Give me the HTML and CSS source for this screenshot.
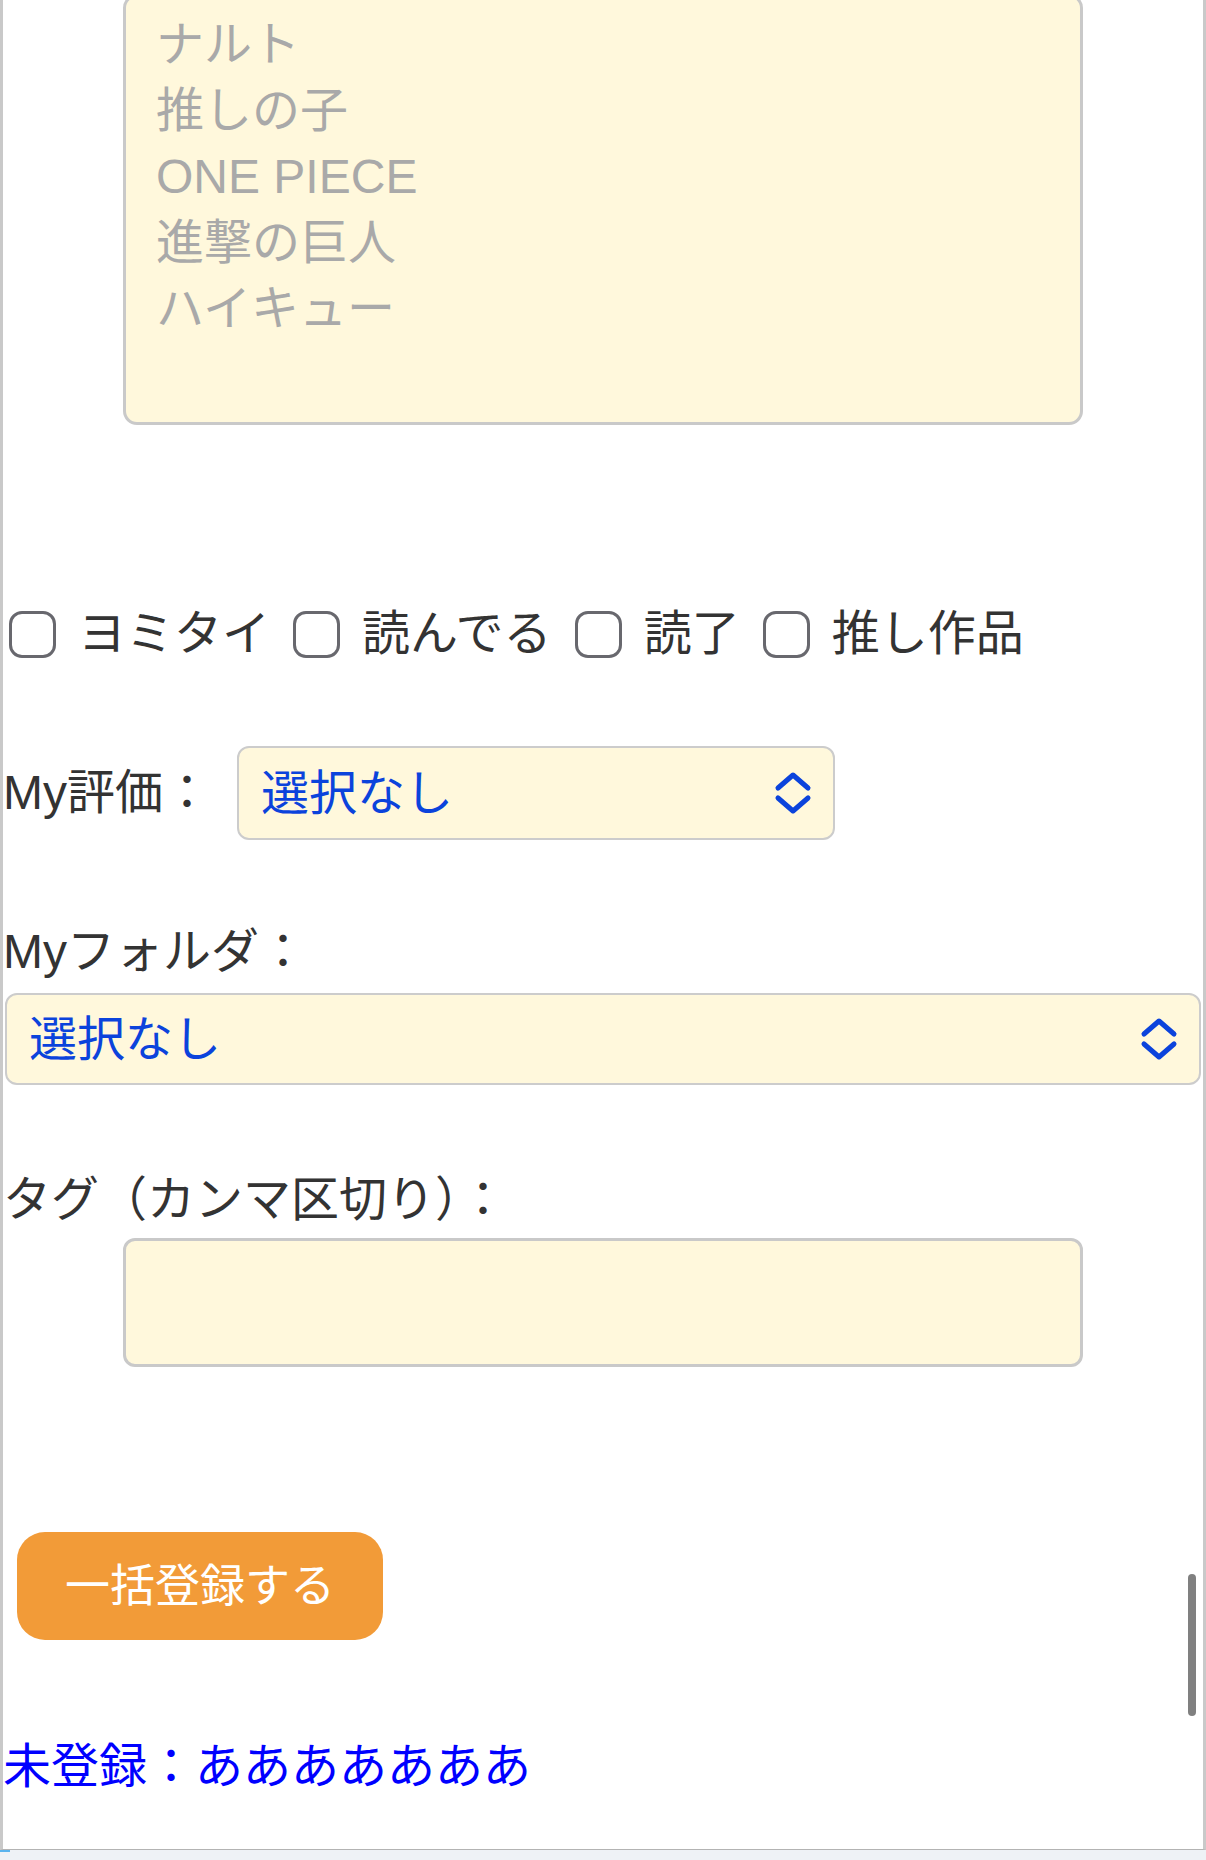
FILE: index.html
```html
<!DOCTYPE html>
<html lang="ja">
<head>
<meta charset="utf-8">
<title>一括登録</title>
<link rel="stylesheet" href="styles.css">
</head>
<body>
<div class="frame">
  <form class="form">
    <textarea class="titles" placeholder="ナルト&#10;推しの子&#10;ONE PIECE&#10;進撃の巨人&#10;ハイキュー"></textarea>

    <div class="statuses">
      <label class="check"><input type="checkbox"><span>ヨミタイ</span></label>
      <label class="check"><input type="checkbox"><span>読んでる</span></label>
      <label class="check"><input type="checkbox"><span>読了</span></label>
      <label class="check"><input type="checkbox"><span>推し作品</span></label>
    </div>

    <div class="rating">
      <label class="field-label">My評価：</label>
      <div class="select-wrap rating-select">
        <select class="select"><option>選択なし</option></select>
        <svg class="chev" width="40" height="44" viewBox="0 0 40 44" aria-hidden="true">
          <path d="M5 17 L20 4 L35 17 M5 27 L20 40 L35 27" fill="none" stroke="#0b43dc" stroke-width="5" stroke-linecap="round" stroke-linejoin="round"/>
        </svg>
      </div>
    </div>

    <div class="field-label folder-label">Myフォルダ：</div>
    <div class="select-wrap folder-select">
      <select class="select"><option>選択なし</option></select>
      <svg class="chev" width="40" height="44" viewBox="0 0 40 44" aria-hidden="true">
        <path d="M5 17 L20 4 L35 17 M5 27 L20 40 L35 27" fill="none" stroke="#0b43dc" stroke-width="5" stroke-linecap="round" stroke-linejoin="round"/>
      </svg>
    </div>

    <div class="field-label tag-label">タグ（カンマ区切り）：</div>
    <input class="tags" type="text">

    <button class="submit" type="button">一括登録する</button>

    <div class="unregistered">未登録：あああああああ</div>
  </form>
  <div class="scroll-thumb"></div>
</div>
<div class="bottom-bar"><span class="bottom-mark"></span></div>
</body>
</html>
```

FILE: styles.css
```css
* {
  box-sizing: border-box;
}

html,
body {
  margin: 0;
  padding: 0;
}

body {
  font-family: "Liberation Sans", "Noto Sans CJK JP", sans-serif;
  font-size: 48px;
  line-height: 66px;
  color: #333333;
  background: #ffffff;
}

.frame {
  position: relative;
  height: 1850px;
  border-left: 3px solid #c9c9c9;
  border-right: 3px solid #c9c9c9;
  border-bottom: 1px solid #b3b3b3;
  overflow: hidden;
}

.form {
  display: block;
}

.titles {
  display: block;
  width: 80%;
  height: 431px;
  margin: -6px auto 0;
  padding: 15px 30px 11px;
  border: 3px solid #c9c9c9;
  border-radius: 14px;
  background: #fff8dc;
  font: inherit;
  line-height: 66px;
  color: #333333;
  resize: none;
  outline: none;
}

.titles::placeholder {
  color: #a9a9a9;
  opacity: 1;
}

.statuses {
  display: flex;
  align-items: center;
  height: 66px;
  margin-top: 176px;
  padding-left: 6px;
}

.check {
  display: flex;
  align-items: center;
}

.check + .check {
  margin-left: 23px;
}

.check input {
  -webkit-appearance: none;
  appearance: none;
  width: 47px;
  height: 47px;
  margin: 0 22px 0 0;
  border: 3px solid #68686e;
  border-radius: 13px;
  background: #ffffff;
}

.rating {
  display: flex;
  align-items: center;
  gap: 26px;
  margin-top: 79px;
}

.field-label {
  display: block;
  color: #333333;
}

.select-wrap {
  position: relative;
}

.select {
  -webkit-appearance: none;
  appearance: none;
  display: block;
  width: 100%;
  border: 2px solid #cccccc;
  border-radius: 12px;
  background: #fff8dc;
  font: inherit;
  line-height: normal;
  color: #0b43dc;
  padding: 0 80px 0 22px;
  outline: none;
}

.rating-select {
  width: 598px;
}

.rating-select .select {
  height: 94px;
}

.chev {
  position: absolute;
  top: 50%;
  right: 22px;
  transform: translateY(-50%);
  pointer-events: none;
}

.folder-label {
  margin-top: 79px;
}

.folder-select {
  margin: 8px 2px 0;
}

.folder-select .select {
  height: 92px;
}

.tag-label {
  margin-top: 82px;
}

.tags {
  display: block;
  width: 80%;
  height: 129px;
  margin: 5px auto 0;
  border: 3px solid #c9c9c9;
  border-radius: 12px;
  background: #fff8dc;
  font: inherit;
  outline: none;
}

.submit {
  display: block;
  height: 108px;
  margin: 165px 0 0 14px;
  padding: 0 48px;
  border: none;
  border-radius: 28px;
  background: #f29b38;
  color: #ffffff;
  font-family: inherit;
  font-size: 45px;
  line-height: 1;
}

.unregistered {
  margin-top: 94px;
  color: #0000ff;
}

.scroll-thumb {
  position: absolute;
  top: 1574px;
  right: 7px;
  width: 8px;
  height: 142px;
  border-radius: 4px;
  background: #808080;
}

.bottom-bar {
  position: relative;
  height: 10px;
  background: #eef2f6;
}

.bottom-mark {
  display: block;
  width: 10px;
  height: 2px;
  background: #5ab4ee;
}
```
